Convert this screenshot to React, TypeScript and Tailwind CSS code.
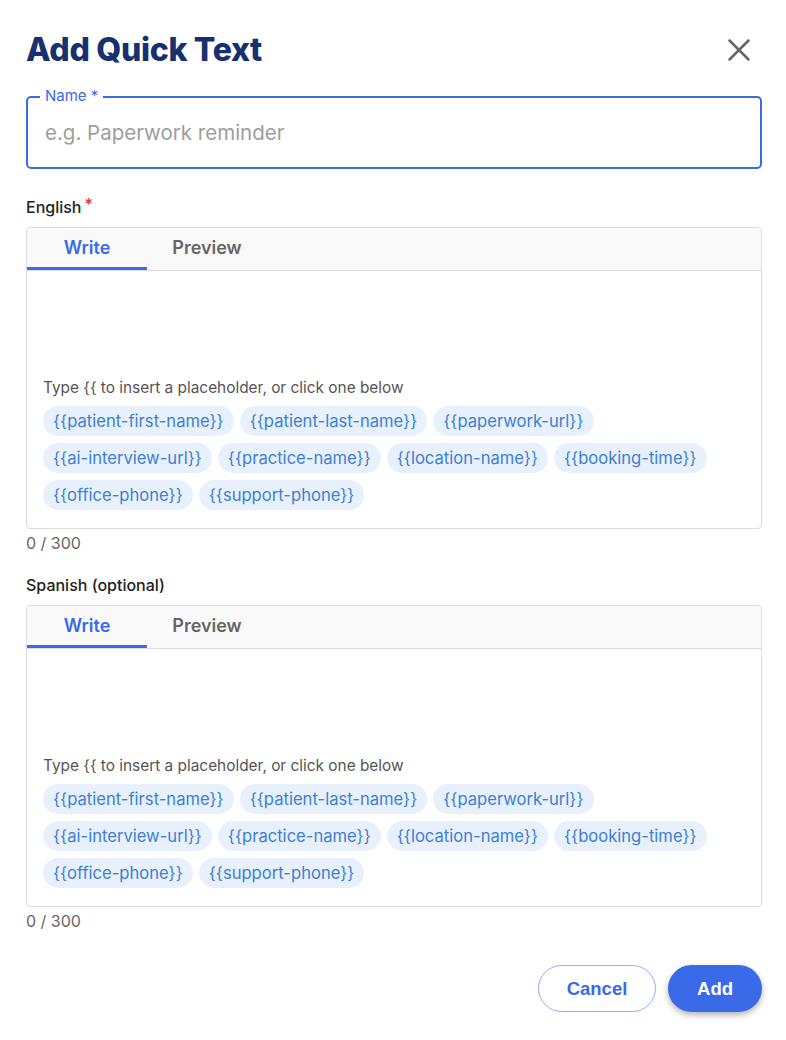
import React, { useState } from 'react';
import { X } from 'lucide-react';

const PLACEHOLDERS = [
  'patient-first-name',
  'patient-last-name',
  'paperwork-url',
  'ai-interview-url',
  'practice-name',
  'location-name',
  'booking-time',
  'office-phone',
  'support-phone',
];

interface EditorProps {
  label: React.ReactNode;
}

const MessageEditor: React.FC<EditorProps> = ({ label }) => {
  const [tab, setTab] = useState<'write' | 'preview'>('write');

  return (
    <div className="flex flex-col">
      <div className="text-[16px] font-medium text-[#222] leading-5 mb-[10px]">{label}</div>
      <div className="border border-[#dcdcdc] rounded-[4px] overflow-hidden">
        <div className="flex h-[43px] bg-[#f9f9f9] border-b border-[#dcdcdc]">
          <button
            onClick={() => setTab('write')}
            className={`w-[120px] text-[18px] font-semibold border-b-[3px] ${tab === 'write' ? 'text-[#3a6ae8] border-[#3a6ae8]' : 'text-[#666] border-transparent'}`}
          >
            Write
          </button>
          <button
            onClick={() => setTab('preview')}
            className={`w-[120px] text-[18px] font-semibold border-b-[3px] ${tab === 'preview' ? 'text-[#3a6ae8] border-[#3a6ae8]' : 'text-[#666] border-transparent'}`}
          >
            Preview
          </button>
        </div>
        <div className="px-4 pt-[107px] pb-[18px]">
          <p className="text-[15.4px] text-[#555] leading-5 mb-[8px]">Type {'{{'} to insert a placeholder, or click one below</p>
          <div className="flex flex-wrap gap-x-[6px] gap-y-[7px]">
            {PLACEHOLDERS.map((p) => (
              <button key={p} className="h-[30px] px-[10px] rounded-full bg-[#e8f1fb] text-[#3d80d4] text-[16.6px] leading-none">
                {'{{'}{p}{'}}'}
              </button>
            ))}
          </div>
        </div>
      </div>
      <div className="text-[16px] text-[#666] mt-[4px] leading-5">0 / 300</div>
    </div>
  );
};

export default function App() {
  return (
    <div className="w-[786px] h-[1040px] bg-white pl-[26px] pr-[24px] pt-[30px] font-['Inter','Roboto',sans-serif]">
      <div className="flex items-center justify-between h-[40px]">
        <h1 className="text-[32px] font-extrabold text-[#17306e] tracking-[-0.3px]">Add Quick Text</h1>
        <button className="mr-[4px] text-[#666]">
          <X size={38} strokeWidth={1.6} />
        </button>
      </div>

      <div className="relative mt-[26px] h-[73px] border-2 border-[#3a6ae8] rounded-[5px] px-[17px] flex items-center">
        <span className="absolute -top-[10px] left-[12px] px-[5px] bg-white text-[15px] text-[#3a6ae8] leading-4">Name *</span>
        <input
          className="w-full h-[40px] outline-none text-[20.5px] text-[#222] placeholder-[#9e9e9e] caret-black"
          placeholder="e.g. Paperwork reminder"
          autoFocus
        />
      </div>

      <div className="mt-[28px]">
        <MessageEditor
          label={
            <span>
              English<span className="text-[#d33] ml-[3px] relative -top-[3px]">*</span>
            </span>
          }
        />
      </div>

      <div className="mt-[22px]">
        <MessageEditor label="Spanish (optional)" />
      </div>

      <div className="flex justify-end gap-[12px] mt-[34px]">
        <button className="w-[118px] h-[47px] rounded-full border border-[#8fb0f5] text-[#3a6ae8] text-[18.5px] font-bold font-['Liberation_Sans',sans-serif]">
          Cancel
        </button>
        <button className="w-[94px] h-[47px] rounded-full bg-[#3a6ae8] text-white text-[18.5px] font-bold font-['Liberation_Sans',sans-serif] shadow-[0_3px_6px_rgba(0,0,0,0.3)]">
          Add
        </button>
      </div>
    </div>
  );
}
